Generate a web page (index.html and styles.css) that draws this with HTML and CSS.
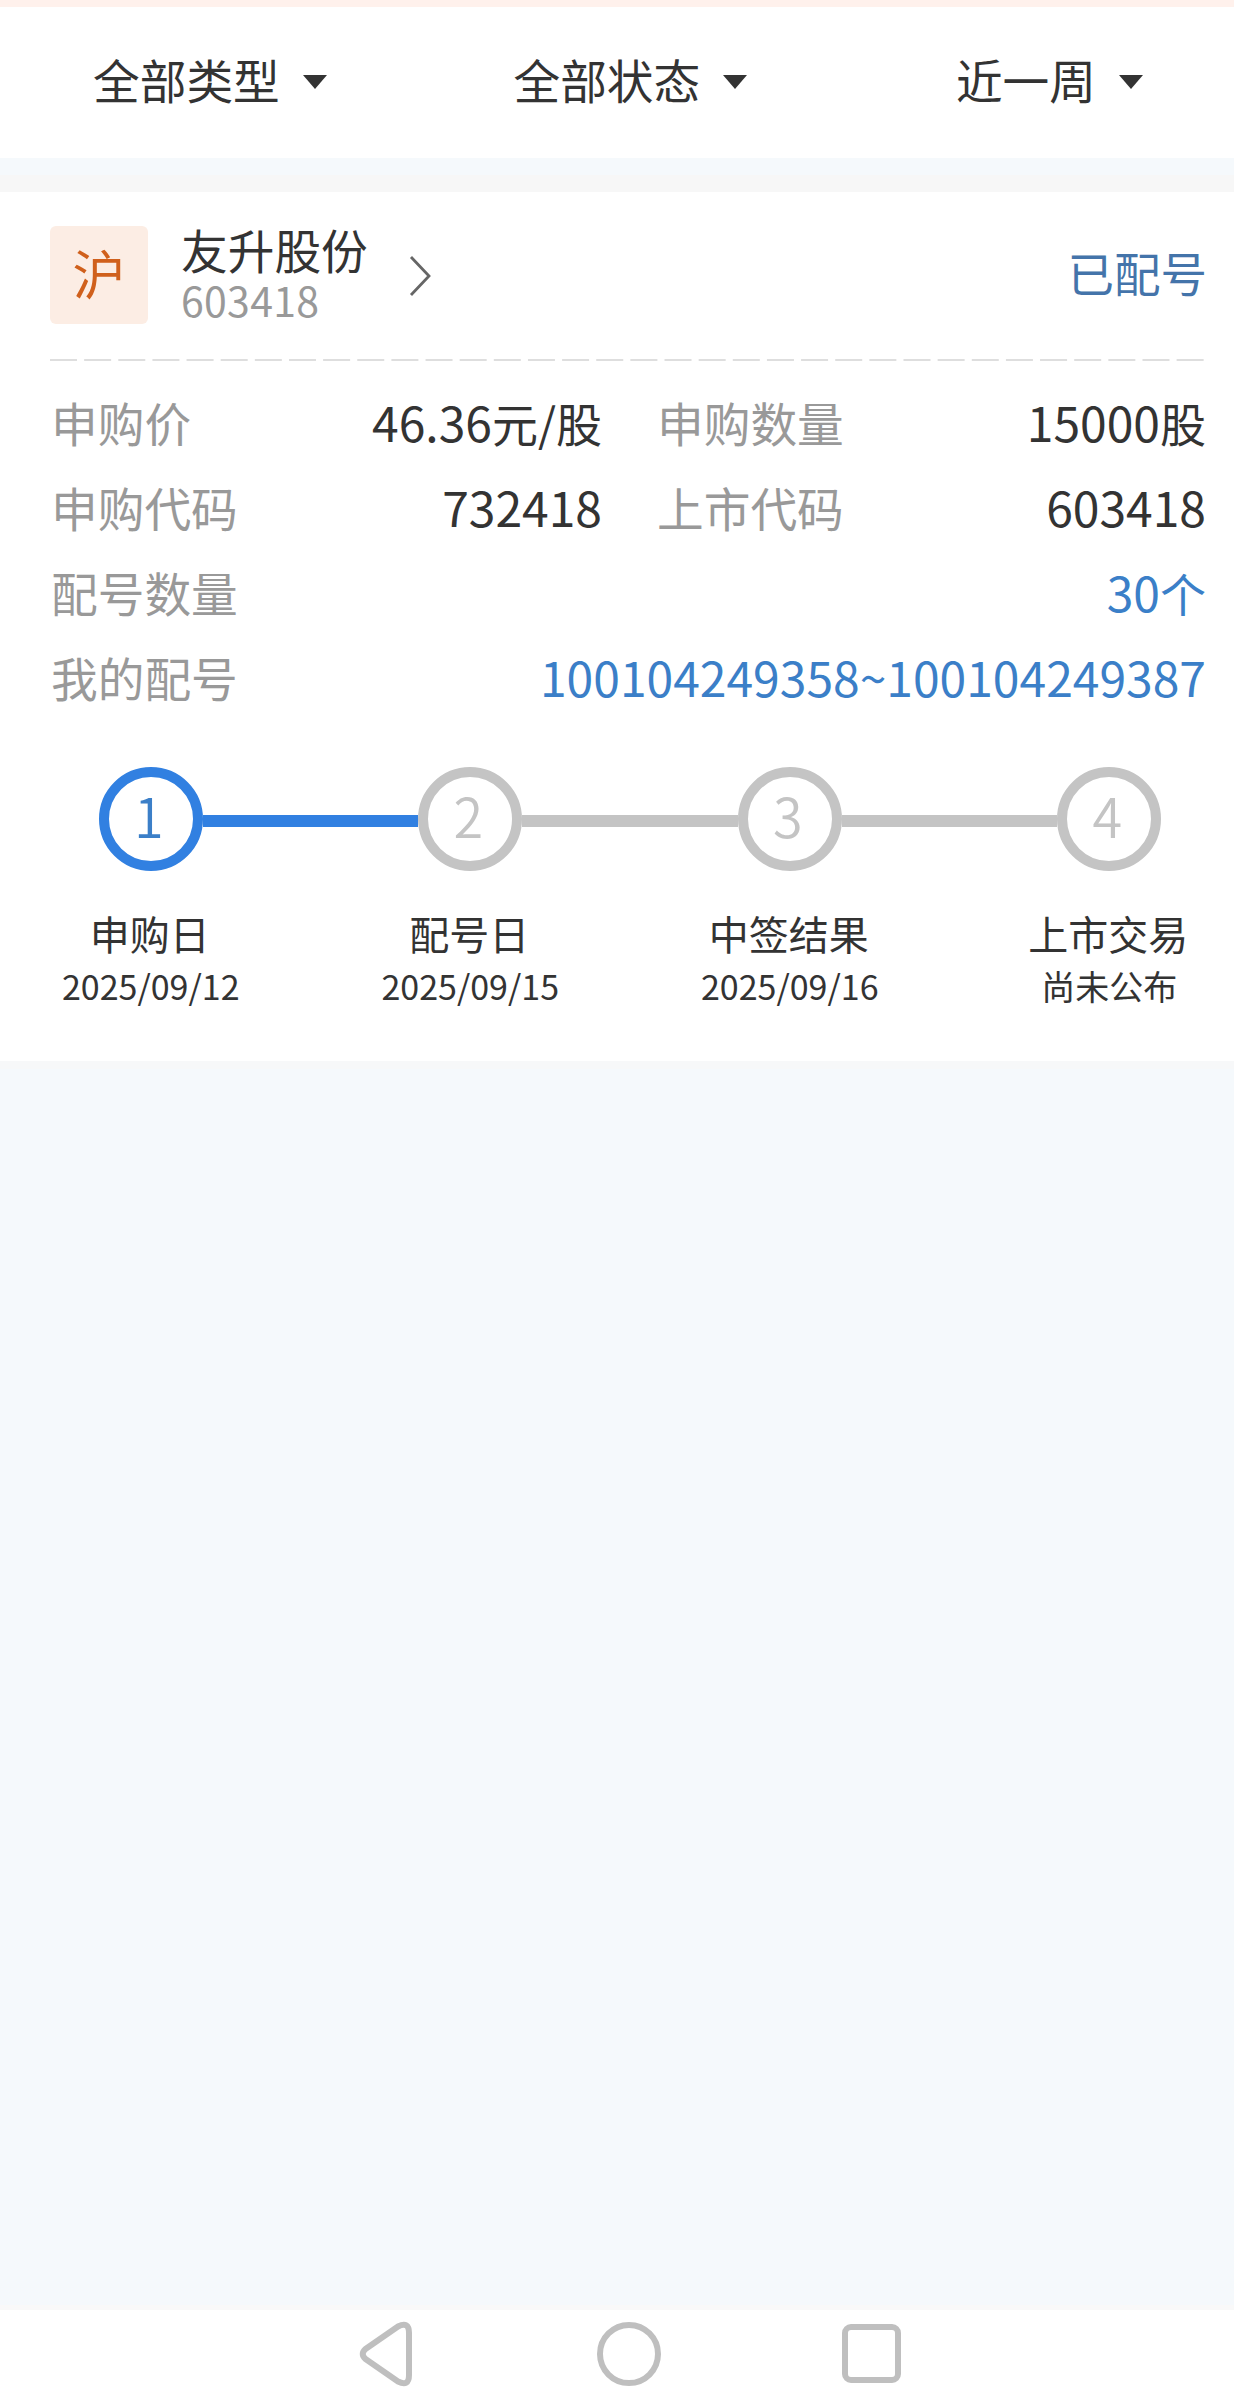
FILE: index.html
```html
<!DOCTYPE html>
<html lang="zh-CN">
  <head>
    <meta charset="UTF-8" />
    <meta name="viewport" content="width=device-width, initial-scale=1.0" />
    <title>新股申购记录</title>
    <link rel="stylesheet" href="styles.css">
  </head>
  <body>
    <!-- 筛选栏 -->
    <div class="filter-bar">
      <div class="filter">全部类型<span class="arrow"></span></div>
      <div class="filter filter-status">全部状态<span class="arrow"></span></div>
      <div class="filter filter-date">近一周<span class="arrow"></span></div>
    </div>

    <div class="content">
      <div class="card">
        <div class="card-header">
          <div class="market">沪</div>
          <div class="stock">
            <div class="stock-name">友升股份</div>
            <div class="stock-code">603418</div>
          </div>
          <svg class="chevron" width="24" height="42" viewBox="0 0 24 42">
            <path d="M2 2 L20 21 L2 40" fill="none" stroke="#666" stroke-width="2.8" />
          </svg>
          <div class="status">已配号</div>
        </div>

        <svg class="divider" width="1154" height="2" viewBox="0 0 1154 2">
          <line x1="0" y1="1" x2="1154" y2="1" stroke="#dedede" stroke-width="2" stroke-dasharray="27 7.14" />
        </svg>

        <!-- 申购信息 -->
        <div class="info">
          <div class="item"><span class="label">申购价</span><span class="value">46.36<span class="unit">元/股</span></span></div>
          <div class="item"><span class="label">申购数量</span><span class="value">15000<span class="unit">股</span></span></div>
          <div class="item"><span class="label">申购代码</span><span class="value">732418</span></div>
          <div class="item"><span class="label">上市代码</span><span class="value">603418</span></div>
          <div class="item wide"><span class="label">配号数量</span><span class="value blue">30<span class="unit">个</span></span></div>
          <div class="item wide"><span class="label">我的配号</span><span class="value blue">100104249358~100104249387</span></div>
        </div>

        <!-- 申购进度 -->
        <div class="steps">
          <div class="step active">
            <div class="track"><span class="line hidden"></span><span class="circle">1</span><span class="line"></span></div>
            <div class="step-name">申购日</div>
            <div class="step-date">2025/09/12</div>
          </div>
          <div class="step">
            <div class="track"><span class="line done"></span><span class="circle">2</span><span class="line"></span></div>
            <div class="step-name">配号日</div>
            <div class="step-date">2025/09/15</div>
          </div>
          <div class="step">
            <div class="track"><span class="line"></span><span class="circle">3</span><span class="line"></span></div>
            <div class="step-name">中签结果</div>
            <div class="step-date">2025/09/16</div>
          </div>
          <div class="step">
            <div class="track"><span class="line"></span><span class="circle">4</span><span class="line hidden"></span></div>
            <div class="step-name">上市交易</div>
            <div class="step-date">尚未公布</div>
          </div>
        </div>
      </div>
    </div>

    <!-- 系统导航键 -->
    <div class="nav-bar">
      <svg width="54" height="66" viewBox="0 0 54 66">
        <path d="M39 5.5 L6.5 28 Q1 33 6.5 38 L39 60.5 Q50 66 50 54 V12 Q50 0 39 5.5 Z" fill="none" stroke="#bfbfbf" stroke-width="6" stroke-linejoin="round" />
      </svg>
      <svg class="home" width="64" height="66" viewBox="0 0 64 66">
        <circle cx="32" cy="33" r="29" fill="none" stroke="#bfbfbf" stroke-width="6" />
      </svg>
      <svg width="60" height="66" viewBox="0 0 60 66">
        <rect x="3" y="6" width="53" height="53" rx="6" fill="none" stroke="#bfbfbf" stroke-width="6" />
      </svg>
    </div>
  </body>
</html>
```

FILE: styles.css
```css
* {
  box-sizing: border-box;
}

body {
  font-family: "Noto Sans CJK SC", sans-serif;
  background-color: #f5f9fc;
  margin: 0;
  color: #333;
  height: 2405px;
  display: flex;
  flex-direction: column;
}

.filter-bar {
  display: flex;
  height: 158px;
  padding: 0 91px 8px 93px;
  border-top: 7px solid #fff1ec;
  background-color: #fff;
  justify-content: space-between;
  align-items: center;
}

.filter {
  display: flex;
  align-items: center;
  font-size: 46.7px;
  line-height: 60px;
}

.filter-status {
  margin-right: 22px;
}

.arrow {
  margin: 7px 0 0 23px;
  border-left: 12px solid transparent;
  border-right: 12px solid transparent;
  border-top: 14px solid #333;
}

.content {
  flex: 1;
  margin-top: 17px;
  border-top: 17px solid #f7f7f7;
  border-bottom: 5px solid #f9f9f9;
}

.card {
  height: 869px;
  padding: 34px 27px 0 50px;
  background-color: #fff;
  box-shadow: 0 8px 0 #f7f8f9;
}

.card-header {
  display: flex;
  height: 98px;
  align-items: center;
}

.market {
  width: 98px;
  height: 98px;
  border-radius: 6px;
  background-color: #fcede4;
  color: #d0601c;
  font-size: 53px;
  line-height: 92px;
  text-align: center;
}

.stock {
  margin: 0 0 4px 33px;
}

.stock-name {
  font-size: 46.7px;
  line-height: 52px;
}

.stock-code {
  font-size: 41px;
  line-height: 48px;
  letter-spacing: 0.3px;
  color: #999;
}

.chevron {
  margin: 2px 0 0 41px;
}

.status {
  margin: 0 0 6px auto;
  font-size: 46.5px;
  line-height: 60px;
  color: #4474aa;
}

.divider {
  display: block;
  margin-top: 35px;
}

.info {
  display: grid;
  grid-template-columns: 552px 550px;
  column-gap: 54px;
  grid-auto-rows: 85px;
  margin-top: 18px;
}

.item {
  display: flex;
  justify-content: space-between;
  align-items: baseline;
  line-height: 84px;
}

.wide {
  grid-column: 1 / 3;
}

.label {
  padding-left: 1px;
  color: #999;
  font-size: 46.7px;
}

.value {
  font-size: 48px;
}

.unit {
  font-size: 46px;
}

.blue {
  color: #3b7fc8;
}

.steps {
  display: flex;
  width: 1278px;
  margin: 48px 0 0 -59px;
}

.step {
  flex: 1;
  text-align: center;
}

.track {
  display: flex;
  align-items: center;
}

.line {
  flex: 1;
  height: 12px;
  margin-top: 3px;
  background-color: #c4c4c4;
}

.hidden {
  visibility: hidden;
}

.circle {
  width: 104px;
  height: 104px;
  padding-right: 4px;
  border: 10px solid #c4c4c4;
  border-radius: 50%;
  color: #c4c4c4;
  font-size: 54px;
  font-weight: 350;
  line-height: 75px;
}

.active .line,
.done {
  background-color: #3180e1;
}

.active .circle {
  border-color: #3180e1;
  color: #3b7fc8;
}

.step-name {
  margin-top: 35px;
  padding-right: 2px;
  font-size: 40px;
  line-height: 54px;
}

.step-date {
  font-size: 34px;
  line-height: 52px;
}

.nav-bar {
  display: flex;
  justify-content: space-between;
  height: 95px;
  padding: 11px 332px 0 359px;
  background-color: #fff;
}

.home {
  margin-left: 3px;
}
```
